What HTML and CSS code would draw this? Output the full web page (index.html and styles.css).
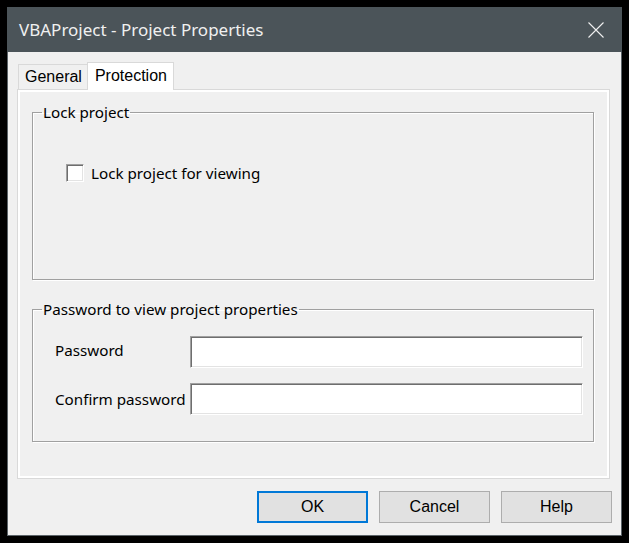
FILE: index.html
```html
<!DOCTYPE html>
<html>
<head>
<meta charset="utf-8">
<link rel="stylesheet" href="styles.css">
</head>
<body>
<div class="window">
  <div class="titlebar">
    <span class="title">VBAProject - Project Properties</span>
    <svg class="close" width="16" height="16" viewBox="0 0 16 16"><path d="M0.5 0.5 L15.5 15.5 M15.5 0.5 L0.5 15.5" stroke="#f0f0f0" stroke-width="1.1" fill="none"/></svg>
  </div>
  <div class="content">
    <div class="tabs">
      <div class="tab">General</div>
      <div class="tab active">Protection</div>
    </div>
    <div class="panel">
      <fieldset class="group group-lock">
        <legend>Lock project</legend>
        <div class="lock-body">
          <label class="check-row"><span class="checkbox"></span><span class="check-label">Lock project for viewing</span></label>
        </div>
      </fieldset>
      <fieldset class="group group-pass">
        <legend>Password to view project properties</legend>
        <div class="pass-body">
          <div class="field-row"><span class="field-label raised">Password</span><span class="input"></span></div>
          <div class="field-row"><span class="field-label">Confirm password</span><span class="input"></span></div>
        </div>
      </fieldset>
    </div>
    <div class="footer">
      <button class="btn default">OK</button>
      <button class="btn">Cancel</button>
      <button class="btn">Help</button>
    </div>
  </div>
</div>
</body>
</html>
```
FILE: styles.css
```css
html, body {
  margin: 0;
  padding: 0;
  background: #000;
}
body {
  width: 629px;
  height: 543px;
  overflow: hidden;
  padding-top: 7px;
  box-sizing: border-box;
}
.window {
  width: 615px;
  height: 529px;
  margin-left: 7px;
  background: #f0f0f0;
  border: 1px solid #5b6368;
  border-top: none;
  box-sizing: border-box;
  display: flex;
  flex-direction: column;
}
.titlebar {
  height: 45px;
  margin: 0 -1px;
  background: #4b5459;
  display: flex;
  align-items: center;
  padding-left: 12px;
  flex-shrink: 0;
}
.title {
  font-family: "Noto Sans", "Open Sans", sans-serif;
  font-size: 17px;
  color: #f0f0f0;
  line-height: 20px;
}
.close {
  margin-left: auto;
  margin-right: 18px;
  display: block;
}
.content {
  padding: 10px 0 0 9px;
}
.tabs {
  display: flex;
  align-items: flex-end;
  height: 27px;
  padding-left: 1px;
}
.tab {
  font-family: "Liberation Sans", Arial, sans-serif;
  font-size: 16px;
  color: #000;
  height: 25px;
  box-sizing: border-box;
  border: 1px solid #d9d9d9;
  border-bottom: none;
  background: #f0f0f0;
  padding: 0 5px 0 6px;
  line-height: 24px;
}
.tab.active {
  position: relative;
  z-index: 1;
  height: 28px;
  margin-left: -1px;
  margin-bottom: -1px;
  background: #fff;
  padding: 0 6px 0 7px;
  line-height: 25px;
}
.panel {
  width: 593px;
  height: 390px;
  box-sizing: border-box;
  border: 1px solid #d9d9d9;
  box-shadow: inset 0 0 0 2px #fff;
  padding: 12px 15px 0 14px;
}
.group {
  margin: 0;
  padding: 0;
  border: 1px solid #a0a0a0;
  box-shadow: inset 1px 1px #fff, 1px 1px #fff;
  min-width: 0;
}
.group legend {
  font-family: "Noto Sans", "Open Sans", sans-serif;
  font-size: 15.2px;
  line-height: 20px;
  color: #000;
  padding: 0 1px;
  margin-left: 9px;
}
.lock-body {
  height: 157px;
  box-sizing: border-box;
  padding: 42px 0 0 33px;
}
.check-row {
  display: flex;
  align-items: center;
  height: 18px;
}
.checkbox {
  width: 18px;
  height: 18px;
  box-sizing: border-box;
  background: #fff;
  border: 1px solid;
  border-color: #a0a0a0 #fff #fff #a0a0a0;
  box-shadow: inset 1px 1px #6e6e6e, inset -1px -1px #e3e3e3;
}
.check-label {
  font-family: "Noto Sans", "Open Sans", sans-serif;
  font-size: 15.2px;
  color: #000;
  margin-left: 7px;
  line-height: 20px;
  white-space: nowrap;
}
.group-pass {
  margin-top: 19px;
}
.pass-body {
  padding: 17px 10px 26px 22px;
  display: flex;
  flex-direction: column;
  gap: 15px;
}
.field-row {
  display: flex;
  align-items: center;
}
.field-label {
  width: 135px;
  flex-shrink: 0;
  font-family: "Noto Sans", "Open Sans", sans-serif;
  font-size: 15.2px;
  color: #000;
  line-height: 20px;
  white-space: nowrap;
}
.field-label.raised {
  margin-top: -4px;
}
.input {
  width: 393px;
  height: 32px;
  flex-shrink: 0;
  box-sizing: border-box;
  background: #fff;
  border: 1px solid;
  border-color: #a0a0a0 #fff #fff #a0a0a0;
  box-shadow: inset 1px 1px #6e6e6e, inset -1px -1px #e3e3e3;
}
.footer {
  display: flex;
  justify-content: flex-end;
  gap: 11px;
  margin-top: 12px;
  padding-right: 9px;
}
.btn {
  width: 111px;
  height: 32px;
  box-sizing: border-box;
  margin: 0;
  padding: 0;
  background: #e1e1e1;
  border: 1px solid #adadad;
  font-family: "Liberation Sans", Arial, sans-serif;
  font-size: 16px;
  color: #000;
}
.btn.default {
  border: 2px solid #0078d7;
}
```
